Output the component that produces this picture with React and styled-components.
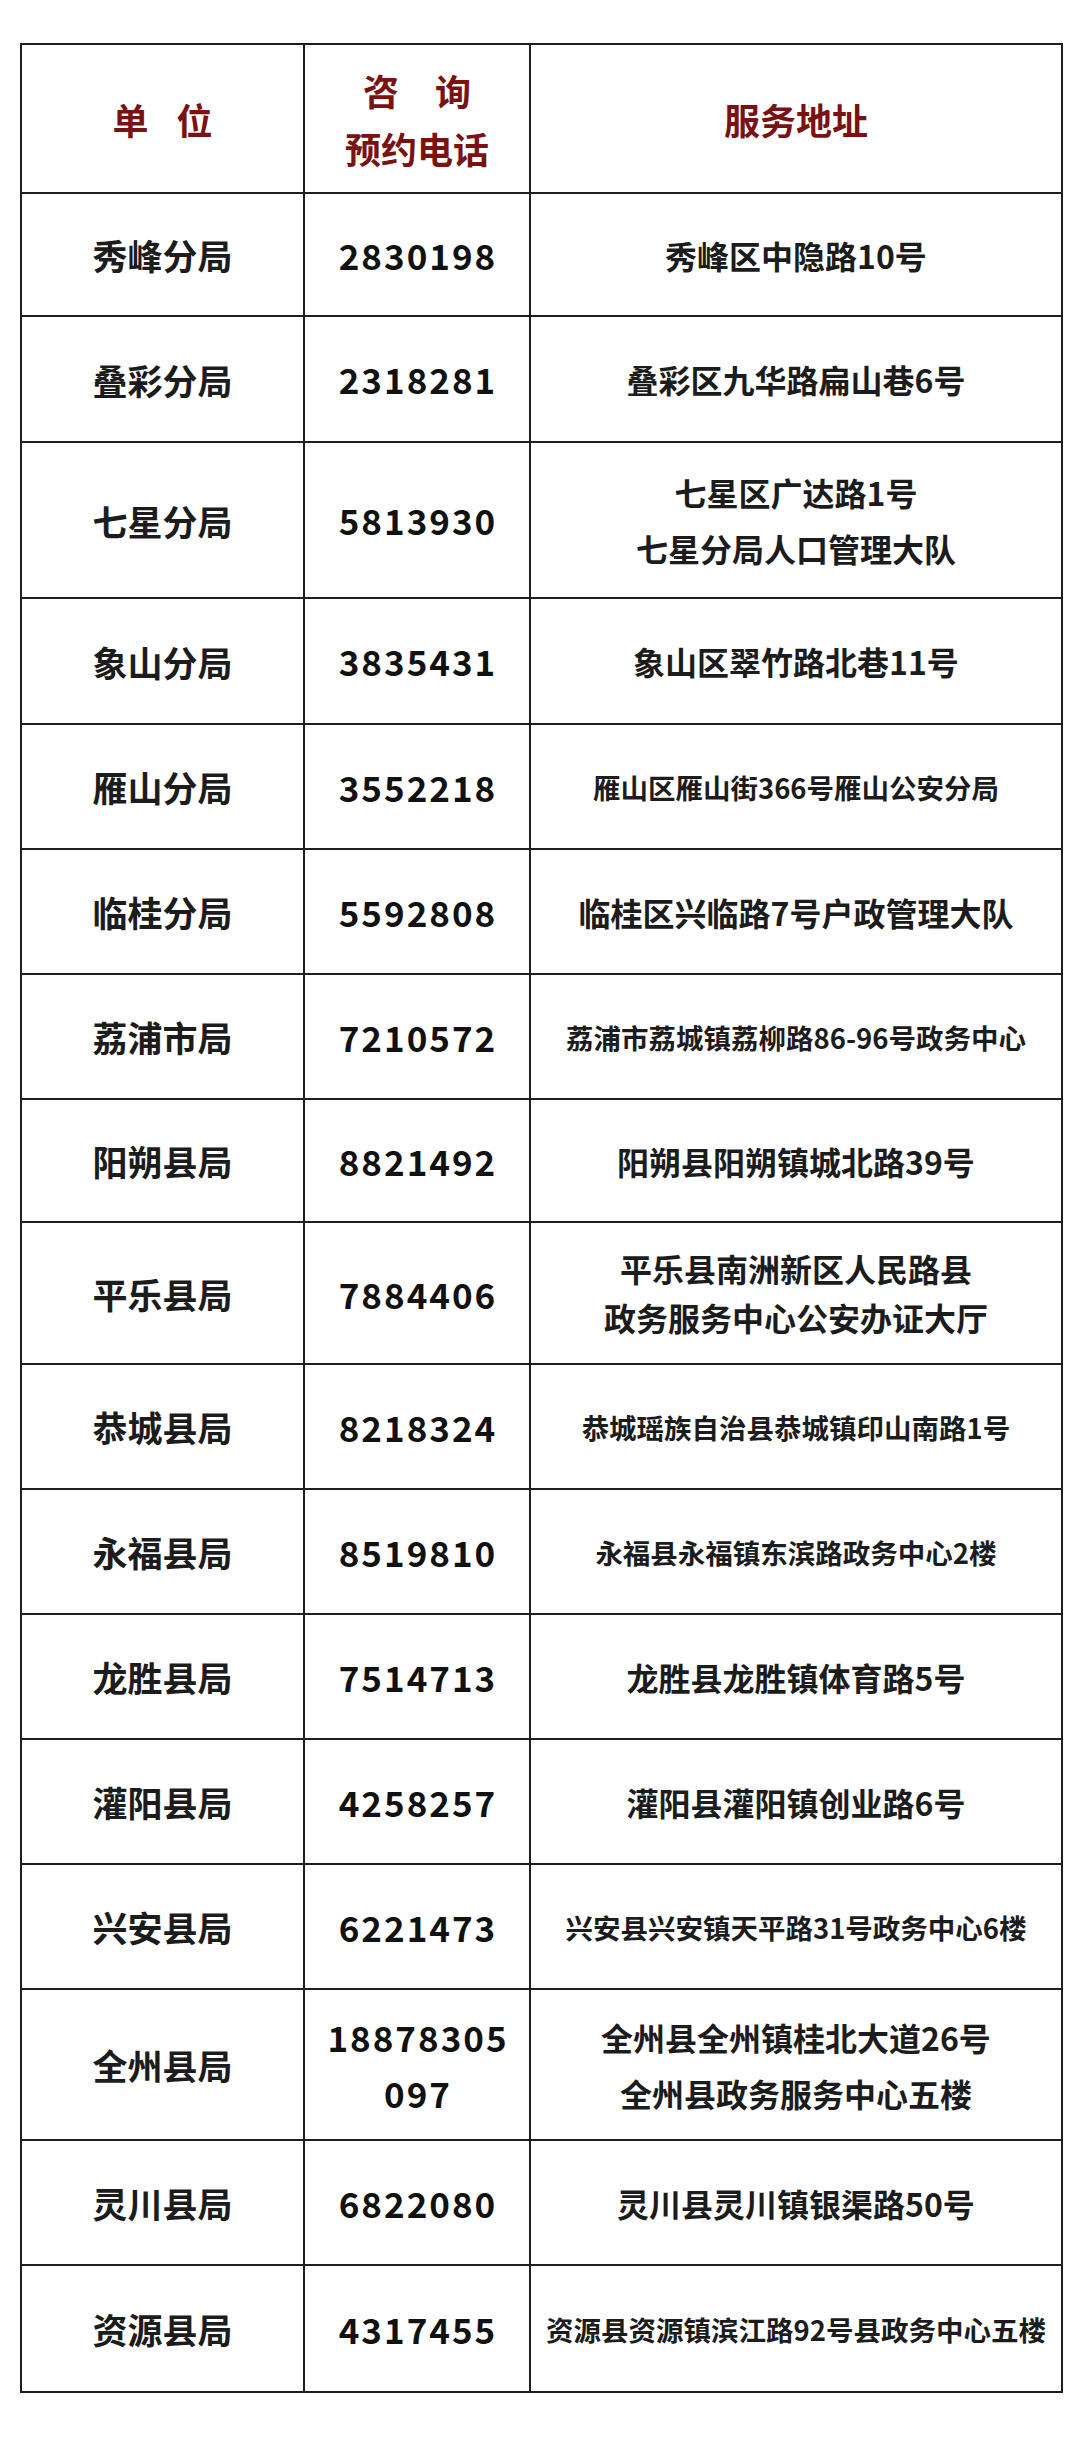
import React from 'react';
import styled, { createGlobalStyle } from 'styled-components';

const GlobalStyle = createGlobalStyle`
  html, body {
    margin: 0;
    padding: 0;
    background: #fff;
  }
  body {
    font-family: "Noto Sans CJK SC", "Noto Sans", sans-serif;
    color: #1c1c1c;
  }
`;

const rows = [
  { name: '秀峰分局', phone: ['2830198'], addr: ['秀峰区中隐路10号'], h: 123 },
  { name: '叠彩分局', phone: ['2318281'], addr: ['叠彩区九华路扁山巷6号'], h: 126 },
  { name: '七星分局', phone: ['5813930'], addr: ['七星区广达路1号', '七星分局人口管理大队'], h: 156, lh: 56 },
  { name: '象山分局', phone: ['3835431'], addr: ['象山区翠竹路北巷11号'], h: 126 },
  { name: '雁山分局', phone: ['3552218'], addr: ['雁山区雁山街366号雁山公安分局'], small: true },
  { name: '临桂分局', phone: ['5592808'], addr: ['临桂区兴临路7号户政管理大队'] },
  { name: '荔浦市局', phone: ['7210572'], addr: ['荔浦市荔城镇荔柳路86-96号政务中心'], small: true },
  { name: '阳朔县局', phone: ['8821492'], addr: ['阳朔县阳朔镇城北路39号'], h: 123 },
  { name: '平乐县局', phone: ['7884406'], addr: ['平乐县南洲新区人民路县', '政务服务中心公安办证大厅'], h: 142, lh: 49 },
  { name: '恭城县局', phone: ['8218324'], addr: ['恭城瑶族自治县恭城镇印山南路1号'], small: true },
  { name: '永福县局', phone: ['8519810'], addr: ['永福县永福镇东滨路政务中心2楼'], small: true },
  { name: '龙胜县局', phone: ['7514713'], addr: ['龙胜县龙胜镇体育路5号'] },
  { name: '灌阳县局', phone: ['4258257'], addr: ['灌阳县灌阳镇创业路6号'] },
  { name: '兴安县局', phone: ['6221473'], addr: ['兴安县兴安镇天平路31号政务中心6楼'], small: true },
  { name: '全州县局', phone: ['18878305', '097'], addr: ['全州县全州镇桂北大道26号', '全州县政务服务中心五楼'], h: 151, lh: 56 },
  { name: '灵川县局', phone: ['6822080'], addr: ['灵川县灵川镇银渠路50号'] },
  { name: '资源县局', phone: ['4317455'], addr: ['资源县资源镇滨江路92号县政务中心五楼'], h: 127, small: true },
];

export default function App() {
  return (
    <>
      <GlobalStyle />
      <Page>
        <Table>
          <colgroup>
            <col style={{ width: 283 }} />
            <col style={{ width: 226 }} />
            <col style={{ width: 532 }} />
          </colgroup>
          <thead>
            <Row $h={149}>
              <HeadCell>
                <span className="spaced">单 位</span>
              </HeadCell>
              <HeadCell>
                <Line $lh={58}>咨　询</Line>
                <Line $lh={58}>预约电话</Line>
              </HeadCell>
              <HeadCell>服务地址</HeadCell>
            </Row>
          </thead>
          <tbody>
            {rows.map((r) => (
              <Row key={r.name} $h={r.h || 125}>
                <NameCell>{r.name}</NameCell>
                <PhoneCell>
                  {r.phone.map((p) => (
                    <Line key={p} $lh={r.lh || 56}>{p}</Line>
                  ))}
                </PhoneCell>
                <AddrCell $small={r.small}>
                  {r.addr.map((a) => (
                    <Line key={a} $lh={r.lh || 56}>{a}</Line>
                  ))}
                </AddrCell>
              </Row>
            ))}
          </tbody>
        </Table>
      </Page>
    </>
  );
}

const Page = styled.div`
  padding: 43px 0 60px 20px;
  min-height: 2459px;
  box-sizing: border-box;
`;

const Table = styled.table`
  width: 1041px;
  border-collapse: collapse;
  table-layout: fixed;
`;

const Row = styled.tr`
  height: ${(p) => p.$h}px;
`;

const Cell = styled.td`
  border: 2px solid #1e1e1e;
  text-align: center;
  vertical-align: middle;
  padding: 0;
  font-weight: 700;
`;

const HeadCell = styled(Cell).attrs({ as: 'th' })`
  color: #7a1212;
  font-size: 36px;

  .spaced {
    word-spacing: 20px;
  }
`;

const NameCell = styled(Cell)`
  font-size: 35px;
  color: #1c1c1c;
`;

const PhoneCell = styled(Cell)`
  font-size: 35px;
  color: #111;
  letter-spacing: 2px;
  text-indent: 2px;
`;

const AddrCell = styled(Cell)`
  font-size: ${(p) => (p.$small ? '27.5px' : '32px')};
  color: #1c1c1c;
`;

const Line = styled.div`
  line-height: ${(p) => p.$lh}px;
`;
